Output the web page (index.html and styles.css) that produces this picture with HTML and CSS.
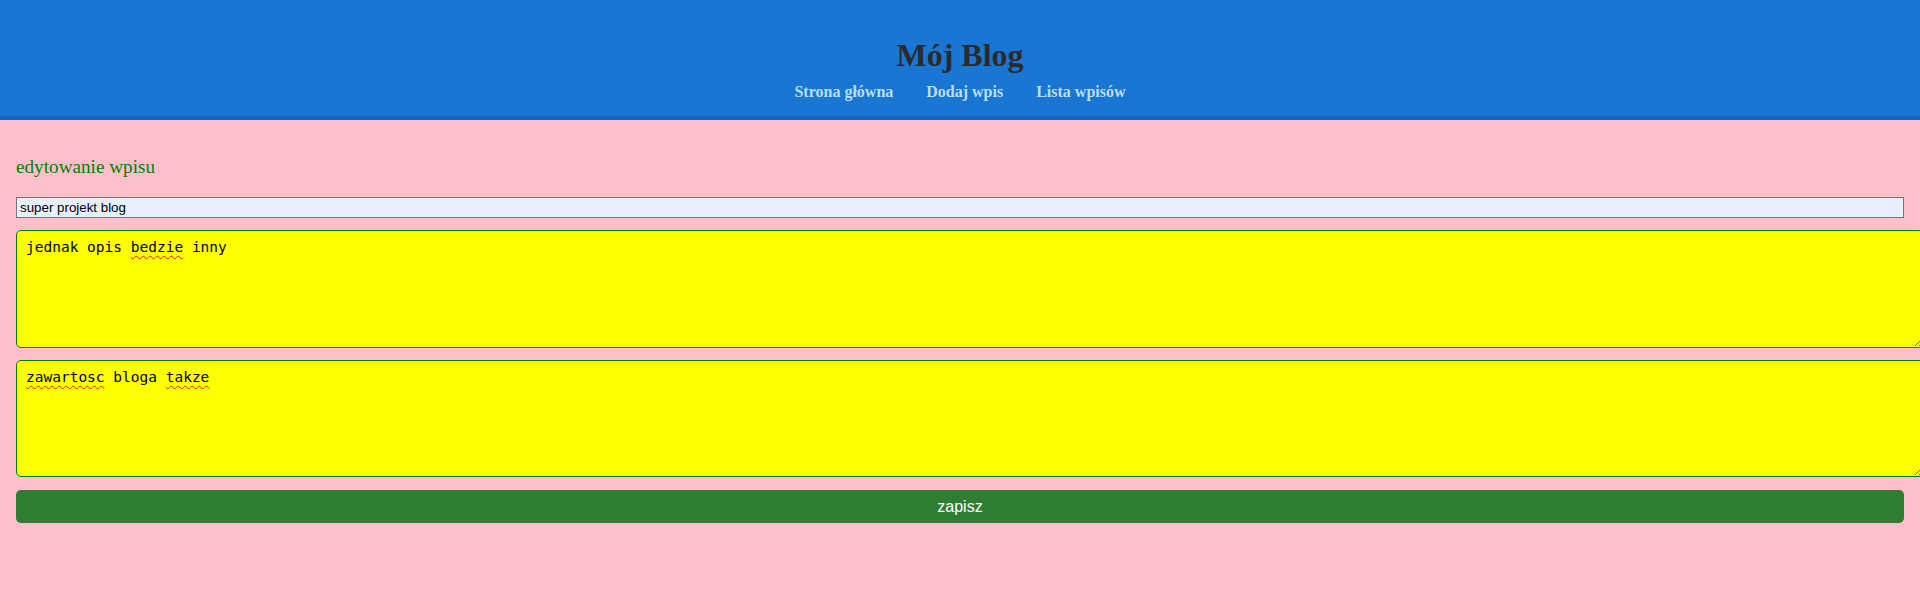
FILE: index.html
```html
<!DOCTYPE html>
<html lang="pl">
<head>
<meta charset="utf-8">
<title>Mój Blog</title>
<link rel="stylesheet" href="styles.css">
</head>
<body>
<header class="site-header">
  <h1 class="site-title">Mój Blog</h1>
  <nav class="site-nav">
    <a href="#" class="nav-link">Strona główna</a>
    <a href="#" class="nav-link">Dodaj wpis</a>
    <a href="#" class="nav-link">Lista wpisów</a>
  </nav>
</header>
<main class="content">
  <h2 class="page-title">edytowanie wpisu</h2>
  <form class="edit-form">
    <input class="field-title" type="text" value="super projekt blog">
    <div class="field-area" role="textbox" aria-multiline="true" contenteditable="true">jednak opis <span class="misspelled">bedzie</span> inny</div>
    <div class="field-area" role="textbox" aria-multiline="true" contenteditable="true"><span class="misspelled">zawartosc</span> bloga <span class="misspelled">takze</span></div>
    <button class="save-btn" type="button">zapisz</button>
  </form>
</main>
</body>
</html>
```
FILE: styles.css
```css
html, body {
  margin: 0;
  padding: 0;
  overflow-x: hidden;
}
body {
  background: #ffc0cb;
  font-family: "Liberation Serif", "Times New Roman", serif;
  min-height: 601px;
}
.site-header {
  background: #1976d2;
  border-bottom: 4px solid #1565c0;
  height: 79px;
  padding-top: 37px;
  text-align: center;
}
.site-title {
  margin: 0 0 9px;
  font-size: 32px;
  font-weight: bold;
  color: #2b2b2b;
  line-height: normal;
}
.site-nav {
  display: flex;
  justify-content: center;
  gap: 33px;
}
.nav-link {
  color: #bbdefb;
  text-decoration: none;
  font-weight: bold;
  font-size: 16px;
}
.content {
  padding: 36px 16px 0;
}
.page-title {
  margin: 0 0 19px;
  font-size: 19.2px;
  font-weight: normal;
  color: #008000;
  line-height: normal;
}
.edit-form {
  display: block;
}
.field-title {
  display: block;
  box-sizing: border-box;
  width: 100%;
  height: 21px;
  margin: 0 0 12px;
  padding: 1px 3px;
  border: 1px solid #767676;
  background: #e8f0fe;
  color: #000;
  font-family: "Liberation Sans", Arial, sans-serif;
  font-size: 13.33px;
  outline: none;
}
.field-area {
  display: block;
  box-sizing: content-box;
  width: 100%;
  height: 100px;
  margin: 0 0 12px;
  padding: 8px 9px;
  border: 1px solid #007a00;
  border-radius: 5px;
  background: #ffff00;
  color: #000;
  font-family: "DejaVu Sans Mono", "Liberation Mono", monospace;
  font-size: 14.5px;
  line-height: normal;
  white-space: pre-wrap;
  overflow: auto;
  resize: vertical;
  outline: none;
}
.field-area + .field-area {
  height: 99px;
  margin-bottom: 13px;
}
.misspelled {
  text-decoration: underline wavy #e0201a;
  text-decoration-thickness: 1px;
  text-underline-offset: 3px;
}
.save-btn {
  display: block;
  box-sizing: border-box;
  width: 100%;
  height: 33px;
  border: none;
  border-radius: 5px;
  background: #2e7d32;
  color: #fff;
  font-family: "Liberation Sans", Arial, sans-serif;
  font-size: 16px;
  cursor: pointer;
}
```
